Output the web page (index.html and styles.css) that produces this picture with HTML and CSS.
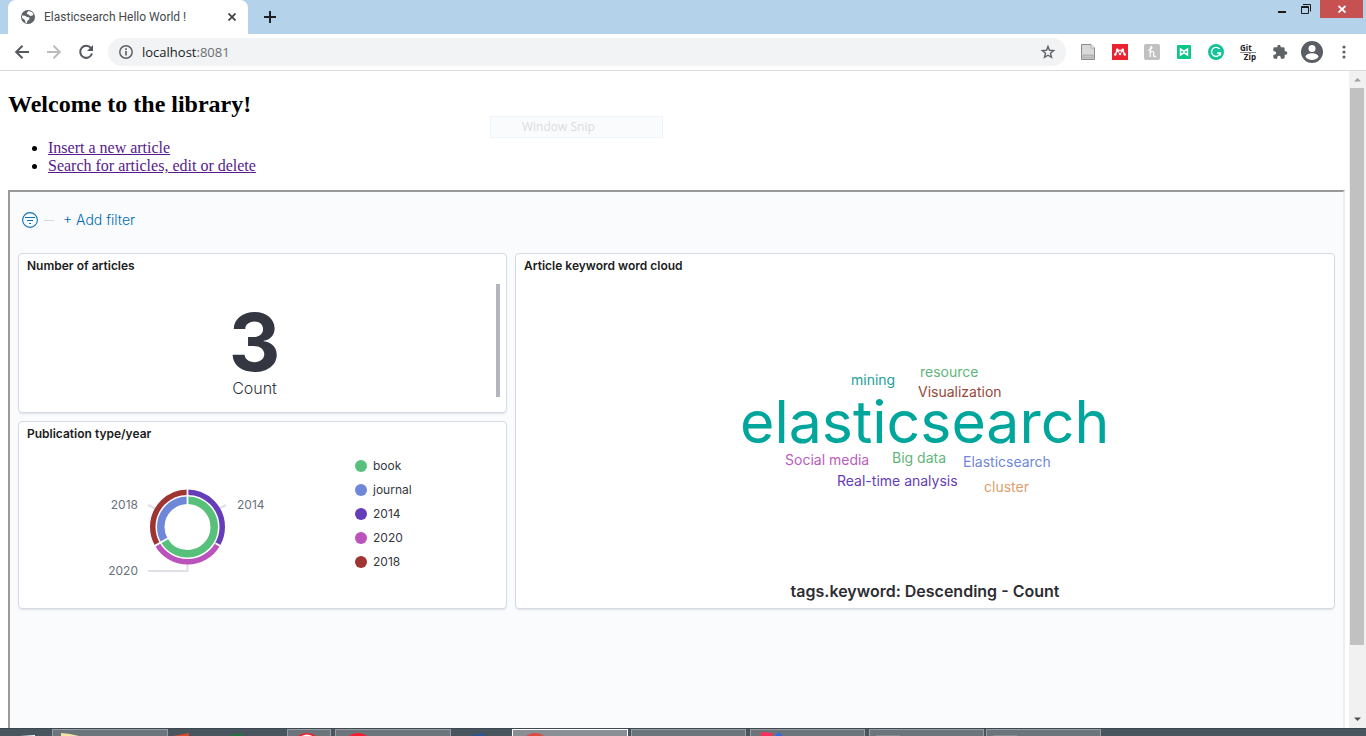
FILE: index.html
```html
<!DOCTYPE html>
<html lang="en">
<head>
<meta charset="utf-8">
<title>Elasticsearch Hello World !</title>
<link rel="stylesheet" href="styles.css">
</head>
<body>
<header class="tabstrip">
  <div class="tab">
    <svg class="globe" width="16" height="16" viewBox="0 0 16 16"><circle cx="8" cy="8" r="7" fill="#5f6368"/><path d="M2 6.500l3 .3 2 1.200 2.200.3.300 2-2 1.400-.7 2.600-1.300-.5-.5-2.500L2 8.800zM8.500 2l3.300 1 1.700 2-1 1.500-2.500.5-1.200-1.500-2-.5.3-1.500z" fill="#fff"/></svg>
    <span class="tab-title">Elasticsearch Hello World !</span>
    <button class="plain tab-close" aria-label="Close tab"><svg width="8" height="8" viewBox="0 0 8 8"><path d="M.5.5l7 7M7.500.5l-7 7" stroke="#3c4043" stroke-width="1.700"/></svg></button>
  </div>
  <button class="plain new-tab" aria-label="New tab"><svg width="14" height="14" viewBox="0 0 14 14"><path d="M7 1v12M1 7h12" stroke="#202124" stroke-width="2"/></svg></button>
  <div class="window-controls">
    <button class="plain minimize" aria-label="Minimize"><svg width="9" height="18" viewBox="0 0 9 18"><path d="M0 12h8" stroke="#1a1a1a" stroke-width="2"/></svg></button>
    <button class="plain restore" aria-label="Restore"><svg width="11" height="18" viewBox="0 0 11 18"><path d="M2 4.500h7.500v7M.5 6.500h7v7h-7zM0 7.500h8" fill="none" stroke="#1a1a1a"/></svg></button>
    <button class="plain window-close" aria-label="Close window"><svg width="8" height="8" viewBox="0 0 8 8"><path d="M.5 1l7 6.500M7.500 1l-7 6.500" stroke="#fff" stroke-width="1.800"/></svg></button>
  </div>
</header>
<nav class="toolbar" aria-label="Browser toolbar">
  <button class="plain nav-button" aria-label="Back"><svg width="16" height="16" viewBox="0 0 16 16"><path d="M15 8H2.500M8.500 1.800L2.200 8l6.300 6.200" fill="none" stroke="#55585d" stroke-width="2"/></svg></button>
  <button class="plain nav-button" aria-label="Forward"><svg width="16" height="16" viewBox="0 0 16 16"><path d="M1 8h12.500M7.500 1.800L13.800 8l-6.300 6.200" fill="none" stroke="#babcbe" stroke-width="2"/></svg></button>
  <button class="plain nav-button" aria-label="Reload"><svg width="16" height="16" viewBox="0 0 16 16"><path d="M13 4.200A6 6 0 1 0 14 9.500" fill="none" stroke="#55585d" stroke-width="2"/><path d="M15 1v6H9z" fill="#55585d"/></svg></button>
  <div class="address">
    <svg width="16" height="16" viewBox="0 0 16 16"><circle cx="8" cy="8" r="6.200" fill="none" stroke="#5f6368" stroke-width="1.500"/><path d="M8 7v4.500M8 4.300V6" stroke="#5f6368" stroke-width="1.700"/></svg>
    <span class="url" role="textbox" aria-label="Address">localhost<span class="port">:8081</span></span>
    <button class="plain" aria-label="Bookmark this page"><svg width="16" height="16" viewBox="0 0 16 16"><path d="M8 2.500l1.500 3.800 4.200.3-3.200 2.700 1 4L8 11.200 4.500 13.300l1-4-3.200-2.700 4.200-.3z" fill="none" stroke="#5f6368" stroke-width="1.400"/></svg></button>
  </div>
  <div class="extensions">
    <button class="plain" aria-label="Document extension"><svg width="16" height="16" viewBox="0 0 16 16"><path d="M1.500.5h9.500l3.500 3.500v11.500h-13z" fill="#d9d9d9" stroke="#8b8b8b"/><path d="M11 .5V4h3.500" fill="#f5f5f5" stroke="#9a9a9a" stroke-width=".7"/><path d="M3 11h10v3H3z" fill="#c4c4c4" stroke="#999" stroke-width=".6"/></svg></button>
    <button class="plain" aria-label="Mendeley"><svg width="16" height="16" viewBox="0 0 16 16"><path fill="#ea2331" d="M0 0h16v16H0z"/><path d="M3.500 10.500L5 6.500M12.500 10.500L11 6.500M5.500 6L6.800 8.500M10.500 6L9.200 8.500" fill="none" stroke="#fff" stroke-width="1.500"/><g fill="#fff"><circle cx="5.300" cy="6" r="1.400"/><circle cx="10.700" cy="6" r="1.400"/><circle cx="8" cy="6.500" r="1"/><circle cx="3.200" cy="10.500" r="1.200"/><circle cx="8" cy="10" r="1.300"/><circle cx="12.800" cy="10.500" r="1.200"/></g></svg></button>
    <button class="plain" aria-label="Honey"><svg width="16" height="16" viewBox="0 0 16 16"><rect width="16" height="16" rx="2" fill="#c1c1c1"/><path d="M4 6C7 6 8.800 4 7.500 2.700 6 2.500 6.200 5 6.200 13M6.200 9c1-2.200 3.500-2.500 3.500 0v2.500c0 1.200 1 1.500 2.300.5" fill="none" stroke="#fff" stroke-width="1.200"/></svg></button>
    <button class="plain" aria-label="Bowtie extension"><svg width="16" height="16" viewBox="0 0 16 16"><rect x="1" y="1" width="14" height="14" rx="1" fill="#0ec589"/><path d="M4.500 5v6L8 8.700l3.500 2.300V5L8 7.300z" fill="none" stroke="#fff" stroke-width="1.500"/></svg></button>
    <button class="plain" aria-label="Grammarly"><svg width="16" height="16" viewBox="0 0 16 16"><circle cx="8" cy="8" r="8" fill="#15c39a"/><path d="M11.500 5A4.500 4.500 0 1 0 12.400 9H9M12.400 8.200V11.500" fill="none" stroke="#fff" stroke-width="1.400"/></svg></button>
    <button class="plain gitzip" aria-label="GitZip"><span class="git">Git</span><span class="zip">Zip</span></button>
    <button class="plain" aria-label="Extensions"><svg width="16" height="16" viewBox="0 0 24 24"><path fill="#5f6368" d="M20.500 11H19V7a2 2 0 0 0-2-2h-4V3.500a2.500 2.500 0 0 0-5 0V5H4a2 2 0 0 0-2 2v3.800h1.500a2.700 2.700 0 0 1 0 5.400H2V20a2 2 0 0 0 2 2h3.800v-1.500a2.700 2.700 0 0 1 5.400 0V22H17a2 2 0 0 0 2-2v-4h1.500a2.500 2.500 0 0 0 0-5z"/></svg></button>
    <button class="plain profile" aria-label="Profile"><svg width="22" height="22" viewBox="0 0 22 22"><circle cx="11" cy="11" r="11" fill="#5a5d66"/><circle cx="11" cy="7.500" r="3.500" fill="#fff"/><path d="M4.500 16c.5-5 12.500-5 13 0-3 4-10 4-13 0z" fill="#fff"/></svg></button>
    <button class="plain" aria-label="Browser menu"><svg width="16" height="16" viewBox="0 0 16 16" fill="#5f6368"><circle cx="8" cy="3" r="1.600"/><circle cx="8" cy="8" r="1.600"/><circle cx="8" cy="13" r="1.600"/></svg></button>
  </div>
</nav>

<div class="viewport">
  <main class="page">
    <h2 class="heading">Welcome to the library!</h2>
    <ul class="links">
      <li><a href="#insert">Insert a new article</a></li>
      <li><a href="#search">Search for articles, edit or delete</a></li>
    </ul>
    <div class="snip">Window Snip</div>
    <section class="dashboard">
      <div class="filters">
        <button class="plain" aria-label="Filter options"><svg width="16" height="16" viewBox="0 0 16 16"><circle cx="8" cy="8" r="7.400" fill="none" stroke="#0d72b5" stroke-width="1.100"/><path d="M3 5.500h10M5 8.500h6M7 11.500h2" stroke="#0d72b5"/></svg></button>
        <span class="dash"></span>
        <button class="plain add-filter">+ Add filter</button>
      </div>
      <div class="grid">
        <article class="panel count-panel">
          <h3 class="panel-title">Number of articles</h3>
          <div class="metric">
            <div class="metric-value">3</div>
            <div class="metric-label">Count</div>
          </div>
        </article>
        <article class="panel cloud-panel">
          <h3 class="panel-title">Article keyword word cloud</h3>
          <div class="cloud">
            <svg width="400" height="150" viewBox="0 0 400 150" font-size="14">
              <text x="15" y="93" font-size="59" fill="#00a69b">elasticsearch</text>
              <text x="126" y="35" fill="#209f98">mining</text>
              <text x="195" y="27" fill="#62b67b">resource</text>
              <text x="193" y="47" fill="#96483a">Visualization</text>
              <text x="60" y="115" fill="#bc5cbc">Social media</text>
              <text x="167" y="113" fill="#62b67b">Big data</text>
              <text x="238" y="117" fill="#6f87d8">Elasticsearch</text>
              <text x="112" y="136" fill="#663db8">Real-time analysis</text>
              <text x="259" y="142" fill="#daa070">cluster</text>
            </svg>
          </div>
          <p class="cloud-caption">tags.keyword: Descending - Count</p>
        </article>
        <article class="panel">
          <h3 class="panel-title">Publication type/year</h3>
          <div class="chart">
            <svg class="donut" width="170" height="100" viewBox="0 0 170 100">
              <g fill="none" stroke="#dfe0e6" stroke-width="2"><path d="M46 23l8 4M124 23l-8 4M46 89h39.500v-9"/></g>
              <g transform="translate(85.500 45)">
                <g transform="rotate(-90)" fill="none">
                  <g stroke-width="5.500">
                    <circle r="34.750" pathLength="3" stroke="#663db8" stroke-dasharray="1 2"/>
                    <circle r="34.750" pathLength="3" stroke="#bc52bc" stroke-dasharray="1 2" stroke-dashoffset="-1"/>
                    <circle r="34.750" pathLength="3" stroke="#9e3533" stroke-dasharray="1 2" stroke-dashoffset="-2"/>
                  </g>
                  <g stroke-width="7.500">
                    <circle r="26.750" pathLength="3" stroke="#57c17b" stroke-dasharray="2 1"/>
                    <circle r="26.750" pathLength="3" stroke="#6f87d8" stroke-dasharray="1 2" stroke-dashoffset="-2"/>
                  </g>
                </g>
                <path d="M0-22V-39M-19 11L-34 19.600M28 16.200L34 19.600" stroke="#fff" stroke-width="1.800"/>
              </g>
              <g font-size="12" fill="#69707d"><text x="36" y="27" text-anchor="end">2018</text><text x="135" y="27">2014</text><text x="36" y="93" text-anchor="end">2020</text></g>
            </svg>
            <ul class="legend">
              <li class="book">book</li>
              <li class="journal">journal</li>
              <li class="y2014">2014</li>
              <li class="y2020">2020</li>
              <li class="y2018">2018</li>
            </ul>
          </div>
        </article>
      </div>
    </section>
  </main>
  <div class="scrollbar">
    <svg width="17" height="17" viewBox="0 0 17 17"><path d="M5 10.500L8.500 7l3.500 3.500z" fill="#a0a0a0"/></svg>
    <div class="thumb"></div>
    <svg width="17" height="17" viewBox="0 0 17 17"><path d="M5 6.500L8.500 10 12 6.500z" fill="#505050"/></svg>
  </div>
</div>

<footer class="taskbar">
  <button class="plain launch start" aria-label="Start"><svg width="52" height="7" viewBox="0 0 52 7"><path d="M20 7l15-1v1z" fill="#fff"/></svg></button>
  <button class="plain task first" aria-label="File Explorer"><svg width="60" height="7" viewBox="0 0 60 7"><path d="M8 3l9 1 9 2v1H8z" fill="#f5e6a5"/></svg></button>
  <button class="plain launch pinned" aria-label="Office apps"><svg width="119" height="7" viewBox="0 0 119 7"><path d="M5 7l16-3v3z" fill="#d9492a"/><path d="M59 7l15-3v3z" fill="#217346"/></svg></button>
  <button class="plain task small" aria-label="Browser"><svg width="42" height="7" viewBox="0 0 42 7"><ellipse cx="19" cy="9" rx="10" ry="6" fill="#f1222e"/><path d="M12 7q7-5 14 0z" fill="#fff"/></svg></button>
  <button class="plain task opera" aria-label="Opera"><svg width="60" height="7" viewBox="0 0 60 7"><ellipse cx="22" cy="9" rx="10" ry="6" fill="#fa1e2e"/></svg></button>
  <button class="plain launch word" aria-label="Word"><svg width="61" height="7" viewBox="0 0 61 7"><path d="M18 7l15-3v3z" fill="#2a5699"/></svg></button>
  <button class="plain task active" aria-label="Chrome"><svg width="60" height="7" viewBox="0 0 60 7"><ellipse cx="22" cy="9" rx="10" ry="6" fill="#df4b40"/></svg></button>
  <button class="plain task" aria-label="Window"></button>
  <button class="plain task" aria-label="Designer"><svg width="60" height="7" viewBox="0 0 60 7"><path d="M10 2l11 1 1 4H10z" fill="#ff2d5b"/><path d="M23 7l5-5 5 5z" fill="#3867e0"/></svg></button>
  <button class="plain task editor" aria-label="Editor"><svg width="60" height="7" viewBox="0 0 60 7"><path d="M6 5h24v2H6z" fill="#878b8d"/></svg></button>
  <button class="plain task" aria-label="Notes"><svg width="60" height="7" viewBox="0 0 60 7"><path d="M6 5h24v2H6z" fill="#878b8d"/></svg></button>
</footer>
</body>
</html>
```
FILE: styles.css
```css
* { box-sizing: border-box; }
body { margin: 0; height: 100vh; display: flex; flex-direction: column; overflow: hidden; background: #fff; font-family: "Open Sans", sans-serif; }
svg { display: block; flex: none; }
.plain { border: 0; padding: 0; margin: 0; background: none; font: inherit; color: inherit; flex: none; }

.tabstrip { flex: none; height: 34px; display: flex; background: #b4d2ea; }
.tab { width: 240px; margin-left: 8px; padding: 0 12px; display: flex; align-items: center; gap: 8px; background: #fff; border-radius: 8px 8px 0 0; }
.tab-title { flex: 1; font-family: Roboto, sans-serif; font-size: 12px; color: #45494d; white-space: nowrap; }
.new-tab { width: 44px; display: flex; justify-content: center; align-items: center; }
.window-controls { margin-left: auto; display: flex; align-items: flex-start; }
.minimize { margin-right: 14px; }
.restore { margin-right: 8px; }
.window-close { width: 43px; height: 18px; margin-right: 3px; display: flex; align-items: center; justify-content: center; background: #c75050; }

.toolbar { flex: none; height: 37px; padding: 0 14px; display: flex; align-items: center; border-bottom: 1px solid #dadbdd; }
.nav-button { margin-right: 16px; }
.nav-button + .nav-button + .nav-button { margin-right: 14px; }
.address { flex: 1; height: 28px; padding: 0 10px; display: flex; align-items: center; gap: 8px; background: #f1f3f4; border-radius: 14px; }
.url { flex: 1; font-size: 13px; color: #202124; }
.port { color: #6b6f73; }
.extensions { margin-left: 14px; display: flex; align-items: center; gap: 16px; }
.profile { margin: 0 -3px; }
.gitzip { width: 16px; display: flex; flex-direction: column; font-size: 8px; line-height: 8px; font-weight: 700; color: #222; }
.git { border-bottom: 1px solid #888; text-align: left; }
.zip { text-align: right; }

.viewport { flex: 1; min-height: 0; display: flex; }
.page { flex: 1; min-width: 0; position: relative; padding: 20px 4px 0 8px; display: flex; flex-direction: column; font-family: "Liberation Serif", serif; font-size: 16px; overflow: hidden; }
.heading { margin: 0 0 21px; font-size: 24px; line-height: 27px; }
.links { margin: 0 0 15px; padding-left: 40px; line-height: 18px; }
.links a { color: #551a8b; }
.snip { position: absolute; left: 490px; top: 45px; width: 173px; padding-left: 31px; border: 1px solid #edf4fc; background: #fafbfd; font-family: "Open Sans", sans-serif; font-size: 12px; line-height: 20px; color: #dcdcdc; }

.dashboard { flex: 1; border: 2px solid #999; border-right-color: #eee; border-bottom: 0; padding: 0 8px; background: #fafbfd; font-family: Inter, sans-serif; color: #343741; }
.filters { height: 61px; padding: 0 4px 5px; display: flex; align-items: center; }
.dash { width: 10px; height: 1px; margin: 0 9px 0 6px; background: #d3dae6; }
.add-filter { font-size: 14px; font-weight: 300; line-height: 18px; color: #006bb4; }
.grid { display: grid; grid-template-columns: 489fr 820fr; grid-template-rows: 160px 188px; gap: 8px; }
.panel { min-width: 0; display: flex; flex-direction: column; background: #fff; border: 1px solid #d3dae6; border-radius: 4px; box-shadow: 0 2px 2px -1px rgba(152, 162, 179, .3); }
.cloud-panel { grid-row: span 2; }
.panel-title { margin: 0; padding: 0 8px; font-size: 12px; line-height: 24px; font-weight: 600; color: #1a1c21; }
.metric { flex: 1; margin: 6px 6px 15px 0; padding: 20px 6px 0 0; border-right: 4px solid #b3b5bf; text-align: center; }
.metric-value { font-size: 80px; line-height: 76px; font-weight: 700; }
.metric-label { font-size: 16px; font-weight: 300; line-height: 17px; }
.cloud { flex: 1; padding-top: 72px; display: flex; justify-content: center; }
.cloud-caption { margin: 0 0 6px; text-align: center; font-size: 16px; line-height: 22px; font-weight: 600; color: #2d2d33; }
.chart { flex: 1; display: grid; grid-template-columns: 336fr 151fr; }
.donut { justify-self: center; margin-top: 36px; }
.legend { margin: 0; padding: 8px 0 0; list-style: none; font-size: 12px; line-height: 24px; }
.legend li { display: flex; align-items: center; gap: 6px; }
.legend li::before { content: ""; width: 12px; height: 12px; border-radius: 50%; background: var(--series); }
.book { --series: #57c17b; }
.journal { --series: #6f87d8; }
.y2014 { --series: #663db8; }
.y2020 { --series: #bc52bc; }
.y2018 { --series: #9e3533; }

.scrollbar { flex: none; width: 17px; display: flex; flex-direction: column; background: #f1f1f1; }
.thumb { height: 87%; max-height: 557px; margin: 0 2px 0 1px; background: #c1c1c1; }
.scrollbar svg:last-child { margin-top: auto; }

.taskbar { flex: none; height: 8px; display: flex; overflow: hidden; background: #49555e; border-top: 1px solid #3d474f; }
.task { width: 115px; height: 12px; margin-right: 4px; border: 1px solid #989da4; background: #6d757c; display: flex; align-items: flex-start; }
.task.first { width: 116px; margin: 0; }
.launch { display: flex; align-items: flex-start; overflow: hidden; }
.task.small { width: 44px; }
.task.opera { width: 116px; margin-right: 0; }
.task.active { width: 116px; margin-right: 3px; border-color: #fff; background: #8a8f96; }
.task.editor { margin-right: 2px; }
```
